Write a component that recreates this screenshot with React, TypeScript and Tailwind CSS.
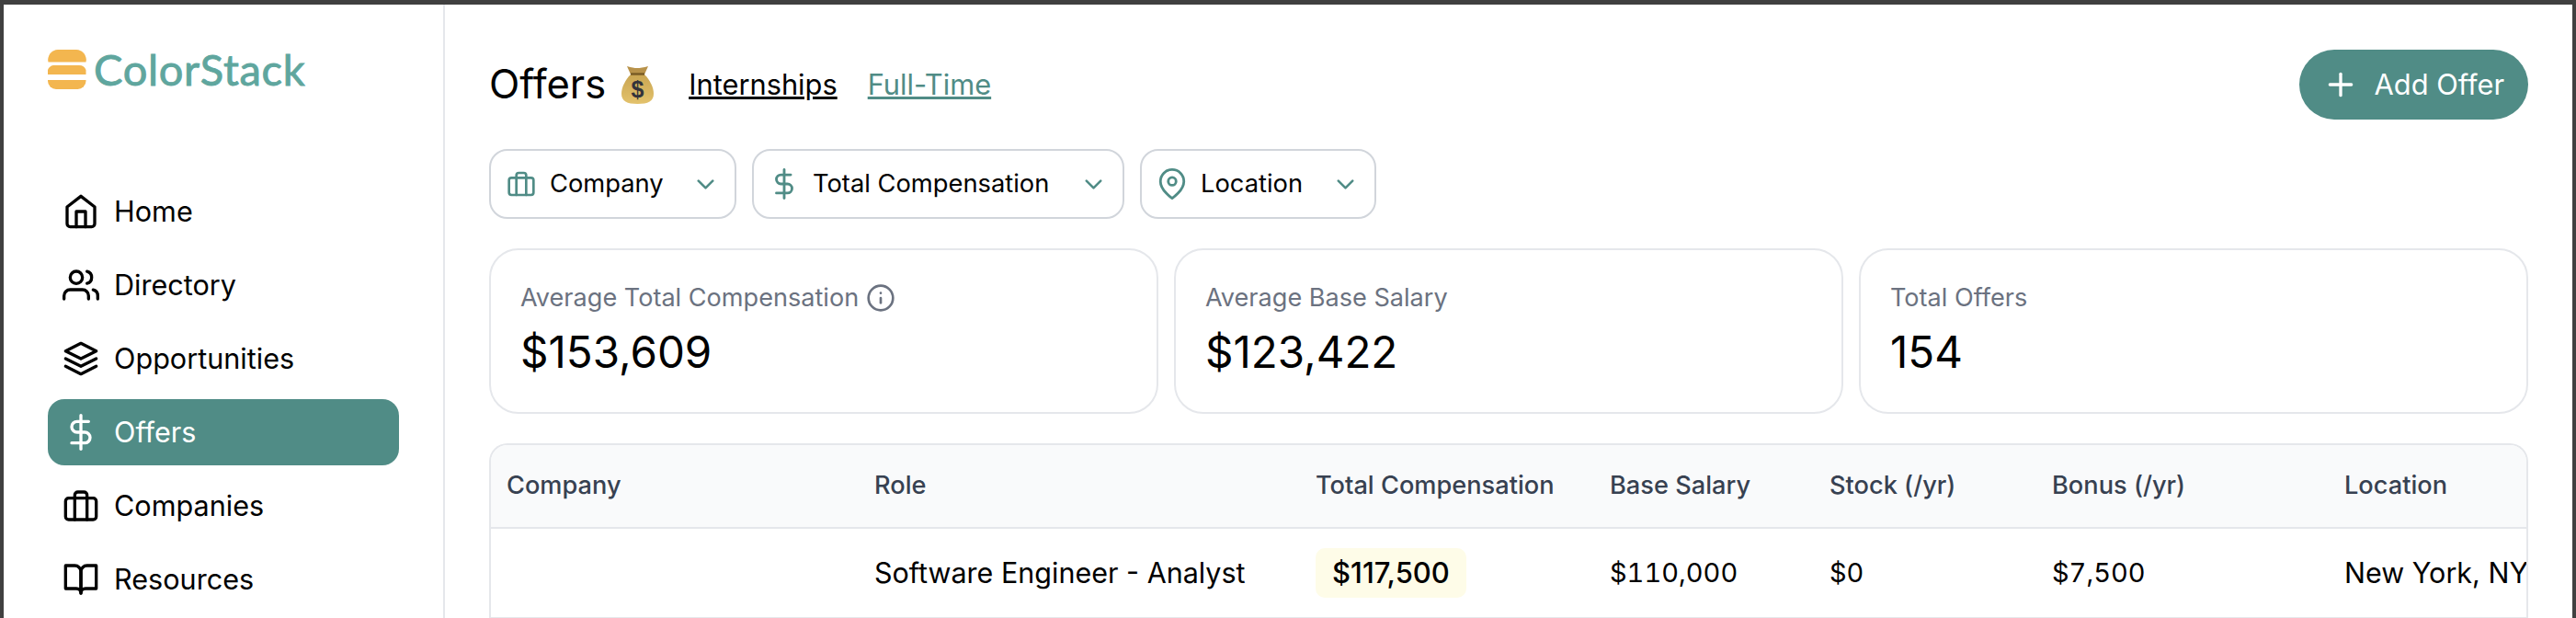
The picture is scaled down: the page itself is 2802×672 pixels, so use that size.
import type { ReactNode } from 'react';
import {
  FiBookOpen,
  FiBriefcase,
  FiChevronDown,
  FiDollarSign,
  FiHome,
  FiInfo,
  FiLayers,
  FiMapPin,
  FiPlus,
  FiUsers,
} from 'react-icons/fi';

const navItems = [
  { label: 'Home', icon: FiHome },
  { label: 'Directory', icon: FiUsers },
  { label: 'Opportunities', icon: FiLayers },
  { label: 'Offers', icon: FiDollarSign, active: true },
  { label: 'Companies', icon: FiBriefcase },
  { label: 'Resources', icon: FiBookOpen },
];

const stats: { label: string; value: string; info?: boolean }[] = [
  { label: 'Average Total Compensation', value: '$153,609', info: true },
  { label: 'Average Base Salary', value: '$123,422' },
  { label: 'Total Offers', value: '154' },
];

function Logo() {
  return (
    <div className="flex h-[43px] items-center gap-[8px]">
      <svg width="42" height="43" viewBox="0 0 42 43" fill="#f3b64f">
        <path d="M11 0h20a11 11 0 0 1 10.500 13.500H.5A11 11 0 0 1 11 0z" />
        <path d="M6 17h28a8 8 0 0 1 7.500 5v5H0v-5a8 8 0 0 1 6-5z" />
        <path d="M0 33h41.500v1a9 9 0 0 1-9 9H9a9 9 0 0 1-9-9z" />
      </svg>
      <span className="font-['Lato',sans-serif] text-[47px] leading-none tracking-[0.7px] text-[#5fa69e] [-webkit-text-stroke:0.9px_#5fa69e]">
        ColorStack
      </span>
    </div>
  );
}

function MoneyBag() {
  return (
    <svg width="35" height="42" viewBox="0 0 35 42">
      <defs>
        <linearGradient id="bag" x1="0" y1="0" x2="0" y2="1">
          <stop offset="0" stopColor="#c9a552" />
          <stop offset="1" stopColor="#e3c26c" />
        </linearGradient>
      </defs>
      <path d="M6 1c5 1.500 8 2 11 2s7-.5 12-2l-4 9c-1 2-13 2-15 0z" fill="#b8924a" />
      <path d="M10 10h15c6 6 10 14 10 21 0 8-6 11-17.500 11S0 39 0 31c0-7 4-15 10-21z" fill="url(#bag)" />
      <path d="M10 9.500h15" stroke="#7a5c26" strokeWidth="2.500" />
      <text
        x="17.500"
        y="35"
        textAnchor="middle"
        fontFamily="'Liberation Sans', sans-serif"
        fontSize="25"
        fontWeight="700"
        fill="#33333b"
      >
        $
      </text>
    </svg>
  );
}

function Filter({ icon, label, width }: { icon: ReactNode; label: string; width: string }) {
  return (
    <div className={`flex h-[76px] items-center rounded-[20px] border-2 border-[#d1d5db] bg-white pr-[16px] pl-[16px] ${width}`}>
      <div className="flex w-[34px] shrink-0 items-center justify-center">{icon}</div>
      <span className="ml-[14px] flex-1 text-[27.300px] text-black">{label}</span>
      <FiChevronDown size={31} className="text-[#508c86]" />
    </div>
  );
}

export default function App() {
  return (
    <div className="flex h-[672px] w-[2802px] overflow-hidden bg-[#404040] pt-[5px] pr-[4px] pl-[4px] font-['Inter',sans-serif]">
      <aside className="w-[480px] shrink-0 border-r-2 border-[#e5e7eb] bg-white pt-[49px] pr-[48px] pl-[48px]">
        <Logo />
        <nav className="mt-[97px] flex flex-col gap-[8px]">
          {navItems.map((item) => {
            const Icon = item.icon;
            return (
              <div
                key={item.label}
                className={`flex h-[72px] items-center gap-[16px] rounded-[18px] pl-[16px] text-[30.600px] ${
                  item.active ? 'bg-[#508c86] text-white' : 'text-black'
                }`}
              >
                <Icon size={40} />
                <span>{item.label}</span>
              </div>
            );
          })}
        </nav>
      </aside>

      <main className="flex min-w-0 flex-1 flex-col gap-[32px] bg-white pt-[49px] pr-[48px] pl-[48px]">
        <div className="flex h-[76px] items-center justify-between">
          <div className="flex items-center gap-[38px]">
            <div className="flex items-center gap-[17px]">
              <h1 className="text-[43.500px] text-black">Offers</h1>
              <MoneyBag />
            </div>
            <div className="flex items-center gap-[33px] text-[30.800px]">
              <span className="text-black underline">Internships</span>
              <span className="text-[#508c86] underline">Full-Time</span>
            </div>
          </div>
          <button className="flex h-[76px] items-center gap-[17px] rounded-full bg-[#508c86] pr-[26px] pl-[25px] text-[30.800px] text-white">
            <FiPlus size={40} />
            Add Offer
          </button>
        </div>

        <div className="flex gap-[17px]">
          <Filter icon={<FiBriefcase size={32} className="text-[#508c86]" />} label="Company" width="w-[269px]" />
          <Filter icon={<FiDollarSign size={36} className="text-[#508c86]" />} label="Total Compensation" width="w-[405px]" />
          <Filter icon={<FiMapPin size={36} className="text-[#508c86]" />} label="Location" width="w-[257px]" />
        </div>

        <div className="grid grid-cols-3 gap-[17px]">
          {stats.map((s) => (
            <div key={s.label} className="flex h-[180px] flex-col gap-[11px] rounded-[32px] border-2 border-[#e5e7eb] px-[32px] pt-[34px]">
              <div className="flex items-center gap-[8px] text-[27.100px] leading-[36px] text-[#6b7280]">
                {s.label}
                {s.info && <FiInfo size={32} />}
              </div>
              <div className="text-[47.500px] leading-[60px] text-black">{s.value}</div>
            </div>
          ))}
        </div>

        <div className="overflow-hidden rounded-t-[20px] border-x-2 border-t-2 border-[#e5e7eb]">
          <table className="w-[2300px] table-fixed border-collapse">
            <colgroup>
              <col className="w-[417px]" />
              <col className="w-[480px]" />
              <col className="w-[320px]" />
              <col className="w-[239px]" />
              <col className="w-[242px]" />
              <col className="w-[318px]" />
              <col />
            </colgroup>
            <thead>
              <tr className="h-[90px] border-b-2 border-[#e5e7eb] bg-[#f9fafb] text-left text-[27.200px] text-[#374151]">
                <th className="pl-[17px] font-medium">Company</th>
                <th className="font-medium">Role</th>
                <th className="font-medium">Total Compensation</th>
                <th className="font-medium">Base Salary</th>
                <th className="font-medium">Stock (/yr)</th>
                <th className="font-medium">Bonus (/yr)</th>
                <th className="font-medium">Location</th>
              </tr>
            </thead>
            <tbody>
              <tr className="h-[98px] border-b-2 border-[#e5e7eb] text-[30.500px] text-black">
                <td />
                <td>Software Engineer - Analyst</td>
                <td>
                  <span className="inline-block rounded-[10px] bg-[#fefce8] px-[18px] py-[9px] text-[31px] leading-[36px] font-medium">$117,500</span>
                </td>
                <td className="text-[29px] tabular-nums">$110,000</td>
                <td className="text-[29px] tabular-nums">$0</td>
                <td className="text-[29px] tabular-nums">$7,500</td>
                <td className="whitespace-nowrap">New York, NY</td>
              </tr>
            </tbody>
          </table>
        </div>
      </main>
    </div>
  );
}
